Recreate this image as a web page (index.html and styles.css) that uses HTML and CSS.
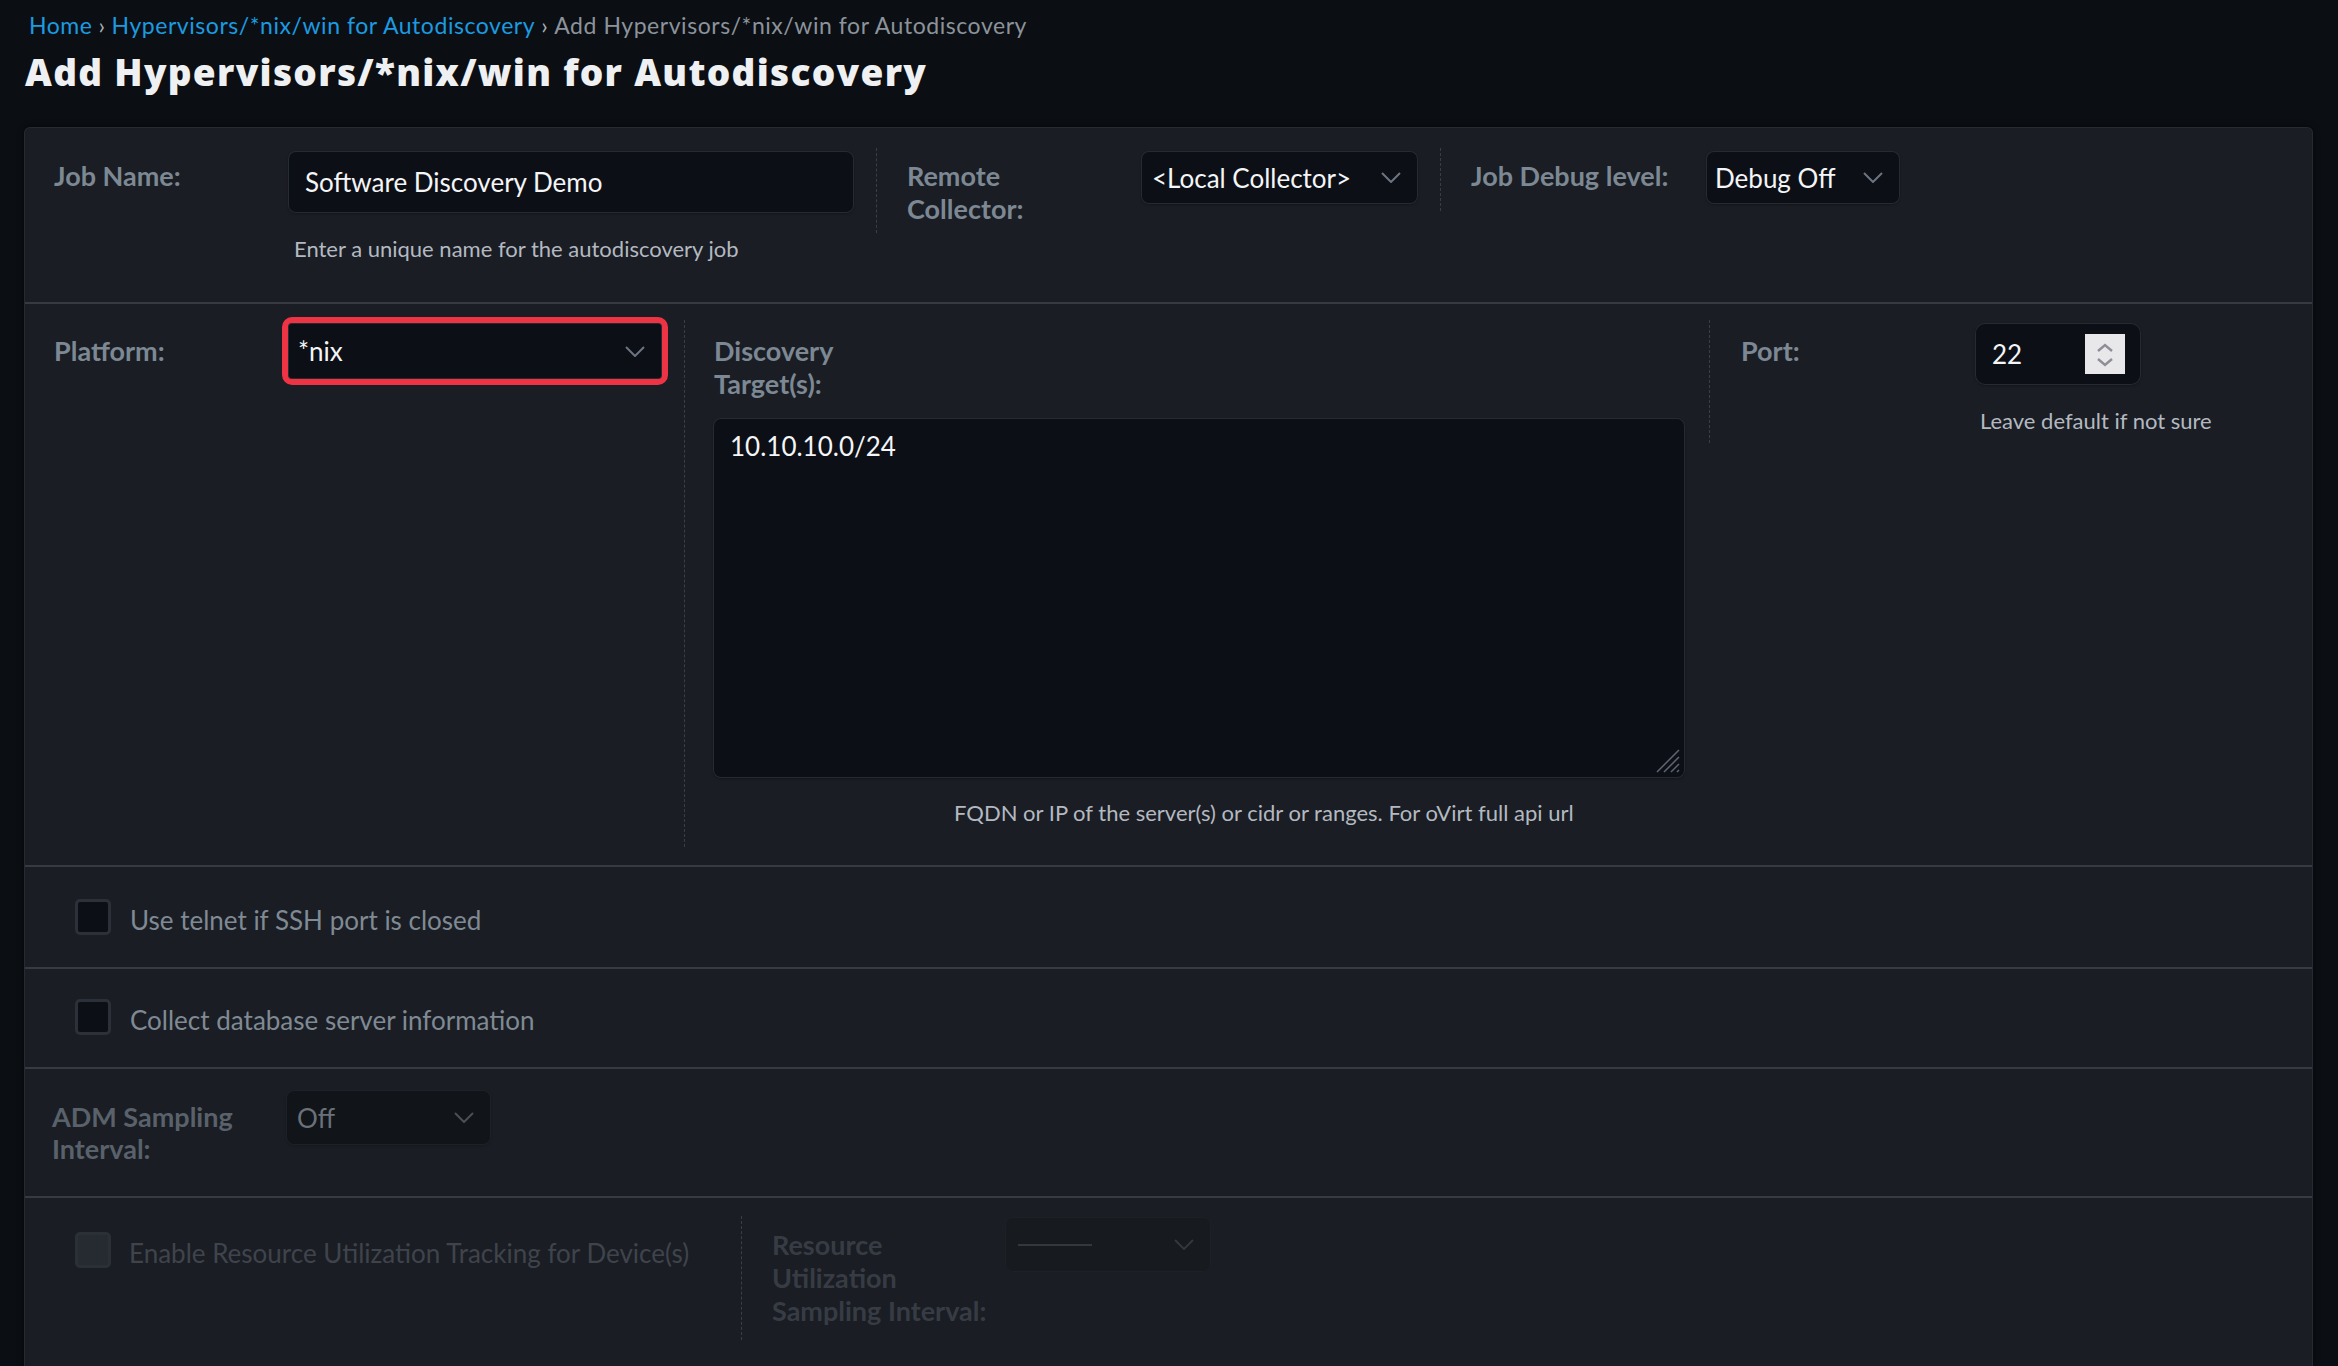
FILE: index.html
```html
<!DOCTYPE html>
<html lang="en">
<head>
<meta charset="utf-8">
<title>Add Hypervisors/*nix/win for Autodiscovery</title>
<link rel="stylesheet" href="styles.css">
</head>
<body>
<header class="head">
  <nav class="crumbs"><a class="crumb-link">Home</a><span class="sep">›</span><a class="crumb-link">Hypervisors/*nix/win for Autodiscovery</a><span class="sep">›</span><span class="crumb-cur">Add Hypervisors/*nix/win for Autodiscovery</span></nav>
  <h1 class="title">Add Hypervisors/*nix/win for Autodiscovery</h1>
</header>

<main class="card">
  <section class="sec sec-job">
    <div class="grp grp-first">
      <label class="lbl">Job Name:</label>
      <div class="fld">
        <div class="input input-job">Software Discovery Demo</div>
        <p class="help help-job">Enter a unique name for the autodiscovery job</p>
      </div>
    </div>
    <div class="grp grp-coll">
      <label class="lbl">Remote<br>Collector:</label>
      <div class="select select-coll"><span class="sel-text">&lt;Local Collector&gt;</span><svg class="chev" viewBox="0 0 20 11"><path d="M1 1 L10 10 L19 1"/></svg></div>
    </div>
    <div class="grp grp-debug">
      <label class="lbl lbl-debug">Job Debug level:</label>
      <div class="select select-debug"><span class="sel-text">Debug Off</span><svg class="chev" viewBox="0 0 20 11"><path d="M1 1 L10 10 L19 1"/></svg></div>
    </div>
  </section>

  <section class="sec sec-target">
    <div class="grp grp-first grp-platform">
      <label class="lbl">Platform:</label>
      <div class="select select-platform"><span class="sel-text">*nix</span><svg class="chev" viewBox="0 0 20 11"><path d="M1 1 L10 10 L19 1"/></svg></div>
    </div>
    <div class="grp grp-disc">
      <label class="lbl">Discovery<br>Target(s):</label>
      <div class="textarea">
        <span class="ta-text">10.10.10.0/24</span>
        <svg class="grip" viewBox="0 0 26 26"><path d="M2 24 L24 2 M9 24 L24 9 M16 24 L24 16 M22 24 L24 22"/></svg>
      </div>
      <p class="help help-disc">FQDN or IP of the server(s) or cidr or ranges. For oVirt full api url</p>
    </div>
    <div class="grp grp-port">
      <label class="lbl">Port:</label>
      <div class="fld">
        <div class="input input-port"><span>22</span>
          <div class="spin"><svg viewBox="0 0 40 40"><path d="M13 17 L20 11 L27 17 M13 25 L20 31 L27 25"/></svg></div>
        </div>
        <p class="help help-port">Leave default if not sure</p>
      </div>
    </div>
  </section>

  <section class="sec sec-chk sec-telnet">
    <span class="box"></span>
    <span class="chk-lbl">Use telnet if SSH port is closed</span>
  </section>

  <section class="sec sec-chk sec-db">
    <span class="box"></span>
    <span class="chk-lbl">Collect database server information</span>
  </section>

  <section class="sec sec-adm">
    <div class="grp grp-first grp-adm">
      <label class="lbl lbl-dim">ADM Sampling<br>Interval:</label>
      <div class="select select-adm"><span class="sel-text">Off</span><svg class="chev" viewBox="0 0 20 11"><path d="M1 1 L10 10 L19 1"/></svg></div>
    </div>
  </section>

  <section class="sec sec-res">
    <div class="grp grp-first grp-res-chk">
      <span class="box box-off"></span>
      <span class="chk-lbl chk-off">Enable Resource Utilization Tracking for Device(s)</span>
    </div>
    <div class="grp grp-res">
      <label class="lbl lbl-off">Resource<br>Utilization<br>Sampling Interval:</label>
      <div class="select select-res"><span class="dash"></span><svg class="chev" viewBox="0 0 20 11"><path d="M1 1 L10 10 L19 1"/></svg></div>
    </div>
  </section>
</main>
</body>
</html>
```

FILE: styles.css
```css
* { box-sizing: border-box; }

body {
  margin: 0;
  background: #0b0e13;
  font-family: Lato, "Liberation Sans", sans-serif;
  color: #e9ebee;
}

.head {
  padding: 12px 0 0 25px;
  height: 127px;
}

.crumbs {
  font-size: 23px;
  line-height: 27px;
  padding-left: 4px;
  letter-spacing: 0.55px;
  color: #8b939b;
}
.crumb-link { color: #1b9be0; }
.sep { margin: 0 6px; color: #aab0b7; }
.crumb-cur { color: #8b939b; }

.title {
  margin: 9px 0 0;
  font-family: "Open Sans", Lato, "Liberation Sans", sans-serif;
  font-size: 37px;
  line-height: 48px;
  font-weight: 800;
  color: #eef0f2;
  letter-spacing: 1.3px;
}

.card {
  margin: 0 25px 0 24px;
  background: #1a1d23;
  border: 1px solid #262a31;
  border-bottom: none;
  border-radius: 6px 6px 0 0;
  box-shadow: 0 0 6px rgba(0, 0, 0, 0.55);
  min-height: 1260px;
}

.sec {
  display: flex;
  align-items: flex-start;
  border-bottom: 2px solid #363a42;
}

.grp {
  display: flex;
  align-items: flex-start;
  padding: 4px 23px 8px 30px;
}
.grp + .grp { border-left: 1px dashed #3a3f47; }
.grp-first { padding-left: 29px; }

.lbl {
  width: 235px;
  flex: none;
  margin-top: 7px;
  font-size: 27px;
  line-height: 33px;
  font-weight: 700;
  color: #7c8893;
}
.lbl-debug { width: 236px; }
.sec-target .lbl { margin-top: 10px; }

.input, .select, .textarea {
  background: #0c0f15;
  border-radius: 7px;
  box-shadow: 0 0 0 1px #262a31, 0 1px 3px rgba(0, 0, 0, 0.5);
  color: #f4f5f7;
}

.input {
  display: flex;
  align-items: center;
  font-size: 26px;
}
.input-job {
  width: 564px;
  height: 60px;
  padding-left: 16px;
}

.help {
  margin: 0;
  font-size: 22px;
  line-height: 28px;
  color: #b3b9c1;
}
.help-job { margin-top: 23px; padding-left: 5px; }

.select {
  display: flex;
  align-items: center;
  justify-content: space-between;
  font-size: 26px;
  height: 51px;
  padding: 0 16px 0 10px;
}
.chev {
  width: 20px;
  height: 11px;
  flex: none;
}
.chev path {
  fill: none;
  stroke: #6c7480;
  stroke-width: 2;
}
.select-coll { width: 275px; }
.select-debug { width: 192px; padding-left: 8px; }

/* section 1 */
.sec-job { padding: 20px 0 39px; }
.sec-job .grp-first { padding-bottom: 0; }

/* section 2 */
.sec-target { padding: 16px 0 18px; }
.grp-platform { padding-bottom: 0; }
.select-platform {
  width: 372px;
  height: 54px;
  padding: 0 16px 0 9px;
  font-size: 26px;
  outline: 6px solid #ee3345;
  outline-offset: 1px;
  border-radius: 3px;
}

.grp-disc {
  flex-direction: column;
  padding: 4px 25px 0 29px;
}
.grp-disc .lbl { width: auto; }
.textarea {
  position: relative;
  width: 970px;
  height: 358px;
  margin-top: 19px;
  padding: 11px 16px;
  font-size: 26px;
  line-height: 32px;
}
.grip {
  position: absolute;
  right: 3px;
  bottom: 3px;
  width: 26px;
  height: 26px;
}
.grip path { stroke: #5f6570; stroke-width: 1.5; fill: none; }
.help-disc {
  margin-top: 22px;
  padding-left: 240px;
  padding-bottom: 20px;
}

.grp-port { padding-left: 31px; }
.input-port {
  width: 164px;
  height: 60px;
  padding-left: 16px;
  justify-content: space-between;
  padding-right: 15px;
  border-radius: 9px;
}
.spin {
  width: 40px;
  height: 40px;
  background: #e8e7ea;
}
.spin svg { width: 40px; height: 40px; display: block; }
.spin path { fill: none; stroke: #8f8d97; stroke-width: 2.4; }
.help-port { margin-top: 23px; padding-left: 4px; }

/* checkbox rows */
.sec-chk {
  align-items: flex-start;
  gap: 19px;
  padding: 32px 0 29px 50px;
}
.sec-db { padding-top: 30px; }
.box {
  width: 36px;
  height: 36px;
  flex: none;
  background: #0c0f15;
  border: 3px solid #2c3038;
  border-radius: 5px;
}
.chk-lbl {
  font-size: 26px;
  line-height: 35px;
  padding-top: 4px;
  color: #7f8a94;
}

/* ADM */
.sec-adm { padding: 18px 0 23px; }
.grp-adm { padding-left: 27px; }
.lbl-dim { color: #59616a; line-height: 32px; margin-top: 10px; }
.select-adm {
  width: 203px;
  height: 53px;
  background: #111419;
  color: #6b7179;
  box-shadow: 0 0 0 1px #1e2228, 0 1px 3px rgba(0, 0, 0, 0.3);
}
.select-adm .chev path { stroke: #4a5058; }

/* resource section */
.sec-res { padding-top: 18px; border-bottom: none; }
.grp-res-chk {
  width: 716px;
  flex: none;
  padding: 16px 0 0 50px;
  gap: 18px;
}
.box-off {
  background: #262a31;
  border-color: #2b2f36;
}
.chk-off { color: #3f444c; }
.grp-res {
  padding: 0 0 0 30px;
  height: 124px;
}
.lbl-off {
  color: #373c44;
  width: 234px;
  margin-top: 12px;
  line-height: 33px;
}
.select-res {
  width: 204px;
  height: 53px;
  margin-top: 2px;
  background: #171a1f;
  box-shadow: 0 0 0 1px #1d2026;
}
.dash {
  width: 74px;
  height: 2px;
  background: #33373e;
  margin-left: 2px;
}
.select-res .chev path { stroke: #33373e; }
```
